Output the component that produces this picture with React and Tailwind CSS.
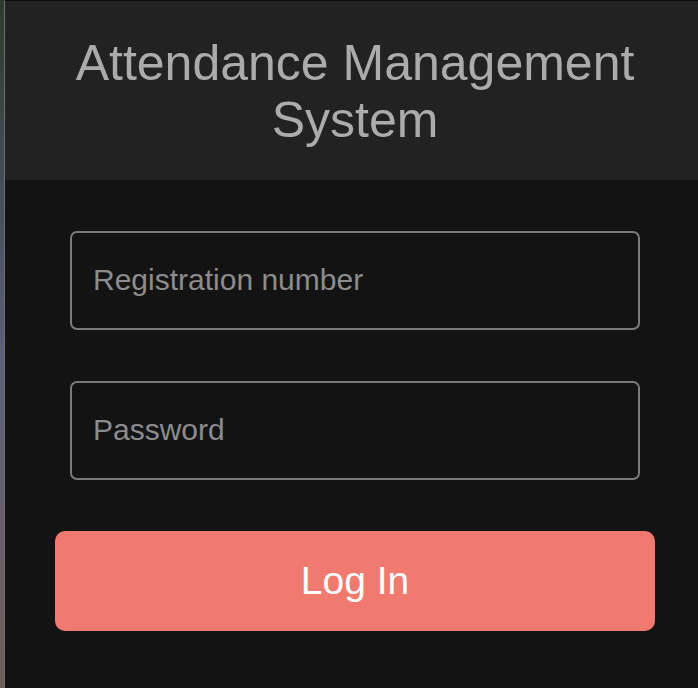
import { useState } from "react";

export default function App() {
  const [regNo, setRegNo] = useState("");
  const [password, setPassword] = useState("");

  const handleSubmit = (e) => {
    e.preventDefault();
  };

  return (
    <div
      className="flex h-[688px] w-[698px] overflow-hidden bg-[#131313]"
      style={{ fontFamily: '"Liberation Sans", Arial, sans-serif' }}
    >
      {/* background photo peeking at the left edge */}
      <div className="w-[4px] shrink-0 bg-gradient-to-b from-[#2c3a2c] via-[#5a5e78] to-[#6d5e58]" />

      <div className="w-[701px] shrink-0 border-l border-t border-l-[#6f6f6f] border-t-[#0c0c0c] bg-[#131313]">
        <div className="bg-[#222222] px-4 pt-[34px] pb-[30px] text-center">
          <h1 className="text-[50px] leading-[1.149] font-normal text-[#ababab]">
            Attendance Management
            <br />
            System
          </h1>
        </div>

        <form onSubmit={handleSubmit} className="flex flex-col px-[50px] pt-[51px]">
          <div className="px-[15px]">
            <input
              type="text"
              value={regNo}
              onChange={(e) => setRegNo(e.target.value)}
              placeholder="Registration number"
              className="h-[99px] w-full rounded-[7px] border-2 border-[#7a7a7a] bg-transparent px-[21px] text-[30px] text-[#cfcfcf] placeholder:text-[#8c8c8c] outline-none"
            />
          </div>

          <div className="mt-[51px] px-[15px]">
            <input
              type="password"
              value={password}
              onChange={(e) => setPassword(e.target.value)}
              placeholder="Password"
              className="h-[99px] w-full rounded-[7px] border-2 border-[#7a7a7a] bg-transparent px-[21px] text-[30px] text-[#cfcfcf] placeholder:text-[#8c8c8c] outline-none"
            />
          </div>

          <button
            type="submit"
            className="mt-[51px] h-[100px] w-full rounded-[10px] bg-[#f07a70] text-[39px] text-white"
          >
            Log In
          </button>
        </form>
      </div>
    </div>
  );
}
